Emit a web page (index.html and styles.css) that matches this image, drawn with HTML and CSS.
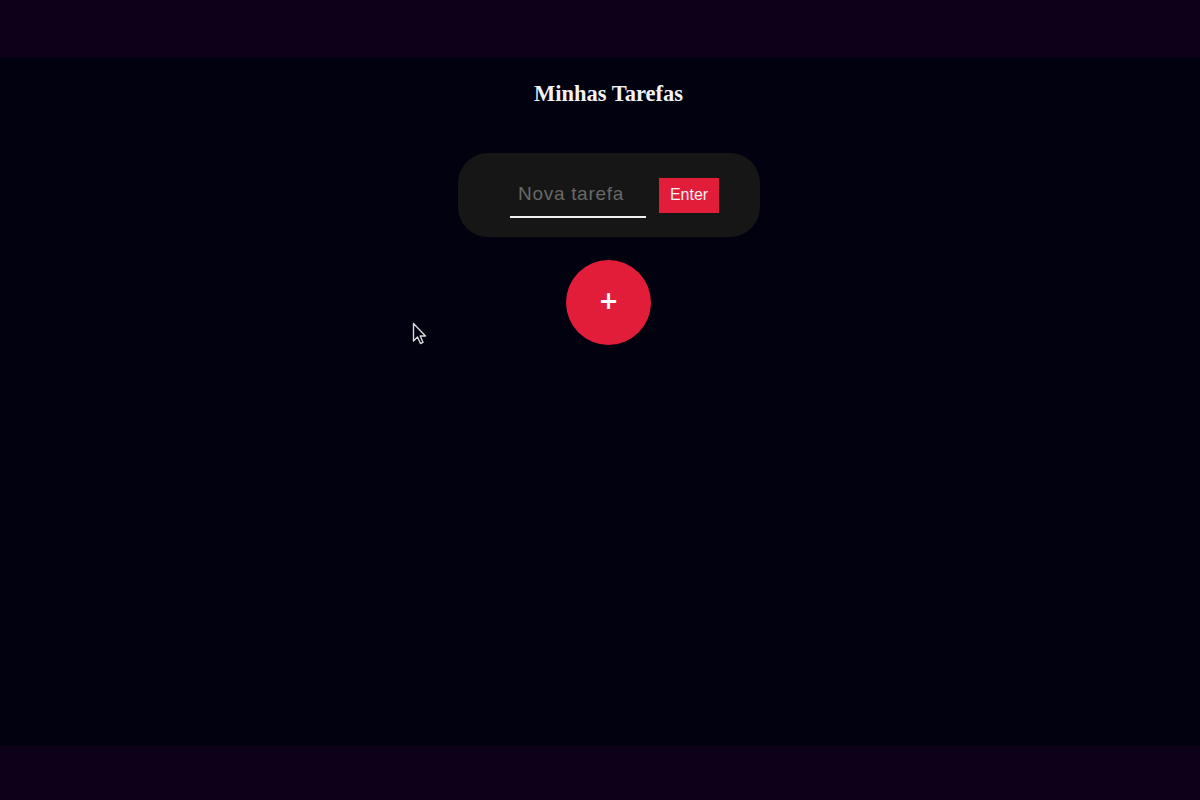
FILE: index.html
```html
<!DOCTYPE html>
<html lang="pt">
<head>
<meta charset="utf-8">
<title>Minhas Tarefas</title>
<link rel="stylesheet" href="styles.css">
</head>
<body>
<div class="band"></div>
<main class="app">
  <h1 class="title">Minhas Tarefas</h1>
  <form class="card">
    <input class="task-input" type="text" placeholder="Nova tarefa">
    <button class="enter-btn" type="button">Enter</button>
  </form>
  <button class="fab" type="button">+</button>
  <svg class="cursor" width="16" height="24" viewBox="0 0 16 24"><path d="M1.5 1.5 L1.5 19 L5.5 15 L8.5 21.5 L11 20.3 L8.2 14 L13.5 14 Z" fill="#02010f" stroke="#d8d8d8" stroke-width="1.4" stroke-linejoin="round"/></svg>
</main>
<div class="band band-bottom"></div>
</body>
</html>
```
FILE: styles.css
```css
html, body {
  margin: 0;
  padding: 0;
  background: #0c0118;
}
.band {
  height: 58px;
  background: #0c0118;
}
.band-bottom {
  height: 54px;
}
.app {
  position: relative;
  height: 688px;
  background: #02010f;
  display: flex;
  flex-direction: column;
  align-items: center;
  padding-left: 17px;
  box-sizing: border-box;
}
.title {
  margin: 23px 0 0;
  font-family: "Liberation Serif", "Times New Roman", serif;
  font-weight: bold;
  font-size: 22.5px;
  line-height: 26px;
  color: #f2f2f2;
}
.card {
  margin: 46px 0 0;
  width: 302px;
  height: 84px;
  box-sizing: border-box;
  border-radius: 30px;
  background: #161616;
  display: flex;
  align-items: center;
  justify-content: center;
  padding-left: 12px;
}
.task-input {
  width: 136px;
  height: 38px;
  margin-top: 7px;
  box-sizing: border-box;
  background: transparent;
  border: none;
  border-bottom: 2px solid #f0f0f0;
  outline: none;
  padding: 0 0 8px 8px;
  font-family: "Liberation Sans", Arial, sans-serif;
  font-size: 19px;
  letter-spacing: 0.7px;
  color: #e0e0e0;
}
.task-input::placeholder {
  color: #686868;
}
.enter-btn {
  margin-left: 13px;
  width: 60px;
  height: 35px;
  border: none;
  background: #e11d3a;
  color: #f4f4f4;
  font-family: "Liberation Sans", Arial, sans-serif;
  font-size: 16px;
  padding: 0;
  cursor: pointer;
}
.fab {
  margin-top: 23px;
  width: 85px;
  height: 85px;
  border-radius: 50%;
  border: none;
  background: #e11d3a;
  color: #ffffff;
  font-family: "DejaVu Sans", sans-serif;
  font-weight: bold;
  font-size: 24px;
  line-height: 1;
  padding: 0 0 3px;
  cursor: pointer;
}
.cursor {
  position: absolute;
  left: 412px;
  top: 264px;
}
```
